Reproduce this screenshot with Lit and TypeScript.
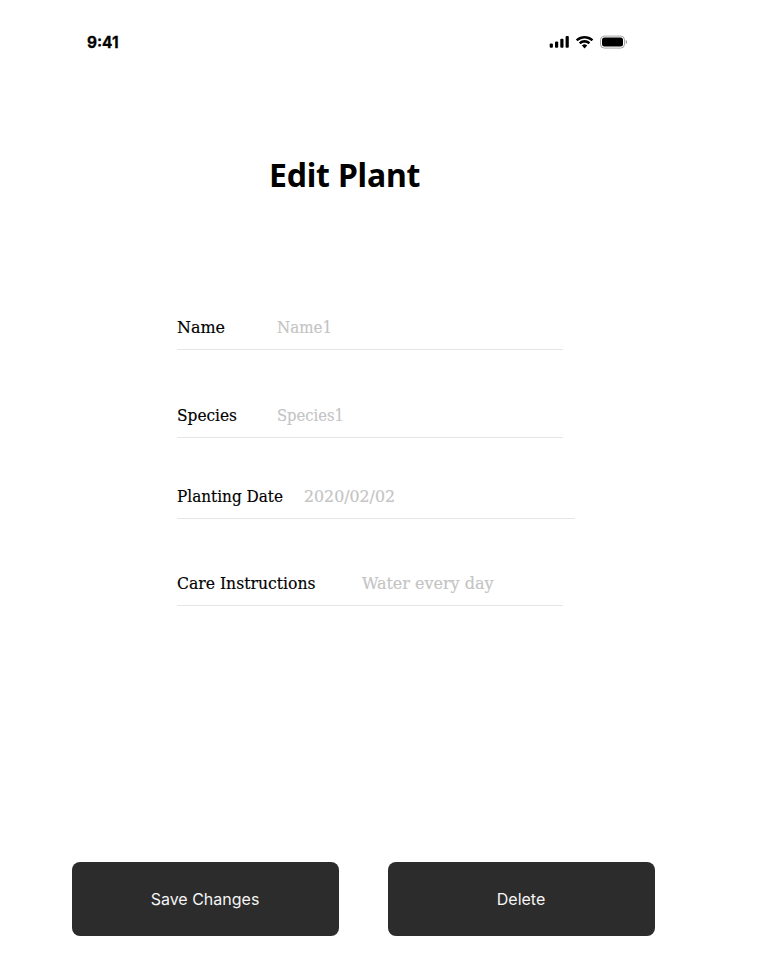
import { LitElement, html, css, svg } from "lit";
import { customElement, property } from "lit/decorators.js";

@customElement("fitted-text")
class FittedText extends LitElement {
  @property() text = "";
  @property({ type: Number }) width = 0;

  static styles = css`
    :host { display: block; flex: none; }
    svg { display: block; overflow: visible; }
    text { fill: currentColor; stroke: currentColor; stroke-width: var(--text-stroke, 0); }
  `;

  render() {
    return html`<svg width=${this.width} height="24">
      ${svg`<text x="0" y="18" textLength=${this.width} lengthAdjust="spacingAndGlyphs">${this.text}</text>`}
    </svg>`;
  }
}

@customElement("app-root")
class AppRoot extends LitElement {
  static styles = css`
    :host {
      display: block;
      box-sizing: border-box;
      width: 757px;
      height: 968px;
      background: #fff;
      color: #000;
      overflow: hidden;
    }
    .screen { display: flex; flex-direction: column; height: 100%; }
    .status {
      display: flex;
      justify-content: space-between;
      align-items: flex-start;
      margin: 30px 129px 0 87px;
      height: 24px;
    }
    .time { font: 700 15.5px "Inter", sans-serif; --text-stroke: 0.3px; }
    .icons { display: block; margin-top: 5px; }
    h1 {
      margin: 97px 0 0 269px;
      height: 48px;
      font: 700 32px/48px "Noto Sans", sans-serif;
      letter-spacing: -0.2px;
      white-space: nowrap;
    }
    .form { margin: 111px 0 0 177px; }
    .row {
      display: flex;
      box-sizing: border-box;
      width: 386px;
      height: 40px;
      padding-top: 5px;
      border-bottom: 1px solid #e6e6e6;
      font: 16.7px "DejaVu Serif Condensed", "DejaVu Serif", serif;
      font-stretch: condensed;
      --text-stroke: 0.15px;
    }
    .row + .row { margin-top: 48px; }
    .row.date { width: 398px; margin-top: 41px; }
    .row.date + .row { margin-top: 47px; }
    .hint { color: #c4c4c4; }
    .actions { display: flex; gap: 49px; margin: auto 0 32px 72px; }
    button {
      width: 267px;
      height: 74px;
      padding: 0 1px 0 0;
      border: 0;
      border-radius: 8px;
      background: #2c2c2c;
      color: #f5f5f5;
      font: 400 16px/16px "Inter", sans-serif;
    }
  `;

  private row(label: string, labelWidth: number, value: string, valueWidth: number, gap: number, kind = "") {
    return html`<div class="row ${kind}" style="gap:${gap}px">
      <fitted-text .text=${label} .width=${labelWidth}></fitted-text>
      <fitted-text class="hint" .text=${value} .width=${valueWidth}></fitted-text>
    </div>`;
  }

  render() {
    return html`<div class="screen">
      <div class="status">
        <fitted-text class="time" .text=${"9:41"} .width=${31.5}></fitted-text>
        <svg class="icons" width="79" height="14" viewBox="0 0 79 14">
          <rect x="0.7" y="8.6" width="3.2" height="4.2" rx="1"/>
          <rect x="6" y="6.4" width="3.2" height="6.4" rx="1"/>
          <rect x="11.3" y="3.8" width="3.2" height="9" rx="1"/>
          <rect x="16.6" y="1" width="3.2" height="11.8" rx="1"/>
          <path transform="translate(27 1)" d="M8.5713 2.46628C11.0584 2.46639 13.4504 3.38847 15.2529 5.04195C15.3887 5.16964 15.6056 5.16803 15.7393 5.03834L17.0368 3.77487C17.1045 3.70911 17.1422 3.62004 17.1417 3.52735C17.1411 3.43467 17.1023 3.34603 17.0338 3.28104C12.3028 -1.09368 4.83907 -1.09368 .108056 3.28104C.039524 3.34598 0 3.4346 0 3.52728C0 3.61996 .0370483 3.70906 .104689 3.77487L1.40255 5.03834C1.53615 5.16823 1.75327 5.16983 1.88893 5.04195C3.69167 3.38836 6.08395 2.46628 8.5713 2.46628ZM8.56795 6.68656C9.92527 6.68647 11.2341 7.19821 12.2403 8.12234C12.3763 8.2535 12.5907 8.25065 12.7234 8.11594L14.0106 6.79681C14.0784 6.72762 14.116 6.63377 14.115 6.5362C14.114 6.43863 14.0746 6.34554 14.0054 6.27774C10.9416 3.38964 6.19688 3.38964 3.13305 6.27774C3.06384 6.34554 3.02435 6.43868 3.02345 6.53628C3.02254 6.63388 3.06028 6.72769 3.12822 6.79681L4.41513 8.11594C4.54778 8.25065 4.76215 8.2535 4.89823 8.12234C5.90368 7.19882 7.21152 6.68713 8.56795 6.68656ZM11.0924 9.48011C11.0943 9.58546 11.0572 9.68703 10.9899 9.76084L8.81327 12.2156C8.74946 12.2877 8.66247 12.3283 8.5717 12.3283C8.48093 12.3283 8.39394 12.2877 8.33013 12.2156L6.1531 9.76084C6.08585 9.68697 6.04886 9.58537 6.05085 9.48002C6.05284 9.37467 6.09365 9.27491 6.16364 9.20429C7.55374 7.8904 9.58966 7.8904 10.9798 9.20429C11.0497 9.27497 11.0904 9.37476 11.0924 9.48011Z"/>
          <rect x="51.5" y="1.1" width="24" height="12" rx="3.8" fill="none" stroke="#000" stroke-opacity=".35"/>
          <path d="M76.8 5.1v4c.8-.35 1.3-1.1 1.3-2s-.5-1.65-1.3-2Z" fill-opacity=".4"/>
          <rect x="53" y="2.6" width="21" height="9" rx="2.5"/>
        </svg>
      </div>
      <h1>Edit Plant</h1>
      <div class="form">
        ${this.row("Name", 48, "Name1", 55, 52)}
        ${this.row("Species", 60, "Species1", 67, 40)}
        ${this.row("Planting Date", 106, "2020/02/02", 91, 21, "date")}
        ${this.row("Care Instructions", 138.5, "Water every day", 131.5, 46.5)}
      </div>
      <div class="actions">
        <button>Save Changes</button>
        <button>Delete</button>
      </div>
    </div>`;
  }
}
